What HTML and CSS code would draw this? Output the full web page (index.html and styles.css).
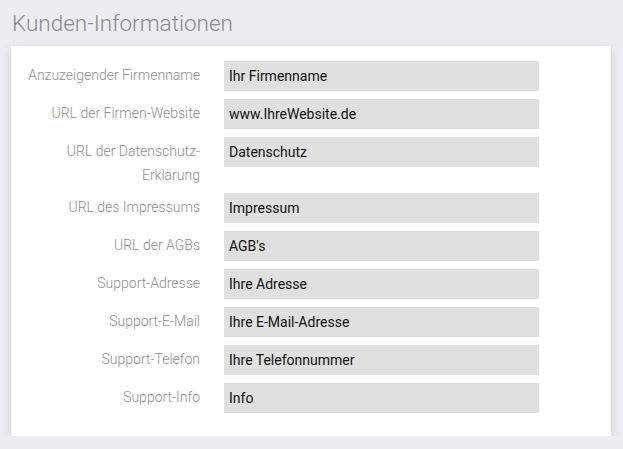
FILE: index.html
```html
<!DOCTYPE html>
<html lang="de">

<head>
    <meta charset="UTF-8" />
    <meta name="viewport" content="width=device-width, initial-scale=1.0" />
    <title>Kunden-Informationen</title>
    <link rel="stylesheet" href="styles.css">
</head>

<body>
    <h2 class="page-title">Kunden-Informationen</h2>

    <div class="card">
        <form class="info-form">
            <label for="firma">Anzuzeigender Firmenname</label>
            <input type="text" id="firma" value="Ihr Firmenname">

            <label for="website">URL der Firmen-Website</label>
            <input type="text" id="website" value="www.IhreWebsite.de">

            <label for="datenschutz">URL der Datenschutz-<br>Erklärung</label>
            <input type="text" id="datenschutz" value="Datenschutz">

            <label for="impressum">URL des Impressums</label>
            <input type="text" id="impressum" value="Impressum">

            <label for="agb">URL der AGBs</label>
            <input type="text" id="agb" value="AGB's">

            <label for="adresse">Support-Adresse</label>
            <input type="text" id="adresse" value="Ihre Adresse">

            <label for="email">Support-E-Mail</label>
            <input type="text" id="email" value="Ihre E-Mail-Adresse">

            <label for="telefon">Support-Telefon</label>
            <input type="text" id="telefon" value="Ihre Telefonnummer">

            <label for="info">Support-Info</label>
            <input type="text" id="info" value="Info">
        </form>
    </div>
</body>

</html>
```

FILE: styles.css
```css
body {
    font-family: 'Roboto', 'Liberation Sans', sans-serif;
    background-color: #ededf1;
    margin: 0;
    padding: 0 12px 0 11px;
}

.page-title {
    font-weight: 300;
    font-size: 22.5px;
    color: #8a8a8a;
    margin: 0;
    padding: 10px 0 0 1px;
    height: 36px;
}

.card {
    background-color: white;
    padding: 15px 0 23px 0;
    box-shadow: 0 3px 10px rgba(0, 0, 0, 0.12);
}

.info-form {
    display: grid;
    grid-template-columns: 189px 315px;
    column-gap: 24px;
    row-gap: 8px;
}

.info-form label {
    text-align: right;
    color: #8f8f8f;
    font-weight: 300;
    font-size: 14px;
    line-height: 24px;
    padding-top: 2px;
    margin-bottom: -2px;
}

.info-form input {
    height: 30px;
    box-sizing: border-box;
    border: none;
    background-color: #e0e0e0;
    padding: 0 5px;
    font-family: inherit;
    font-size: 14px;
    color: #111;
    margin: 0;
}
```
